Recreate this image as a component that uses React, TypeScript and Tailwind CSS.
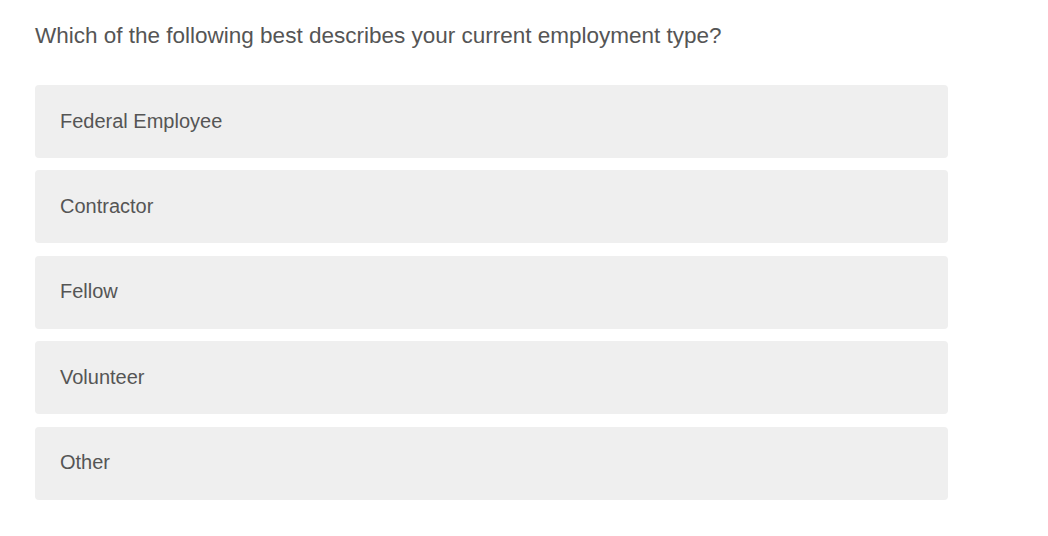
const options = ['Federal Employee', 'Contractor', 'Fellow', 'Volunteer', 'Other'];

export default function App() {
  return (
    <div className="min-h-screen bg-white px-[35px] pt-[22px] font-['Liberation_Sans',Arial,sans-serif] text-[#555555]">
      <h1 className="text-[22.5px] leading-[28px] font-normal">
        Which of the following best describes your current employment type?
      </h1>
      <div className="mt-[35px] flex w-[913px] flex-col gap-[12.4px]">
        {options.map((opt) => (
          <button
            key={opt}
            className="flex h-[73px] items-center rounded-[4px] bg-[#efefef] pr-[24px] pl-[25px] pb-[2px] text-left text-[20px]"
          >
            {opt}
          </button>
        ))}
      </div>
    </div>
  );
}
